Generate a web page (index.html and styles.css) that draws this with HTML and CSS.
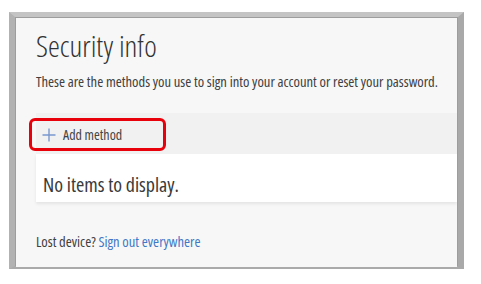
FILE: index.html
```html
<!DOCTYPE html>
<html lang="en">
<head>
  <meta charset="UTF-8" />
  <title>Security info</title>
  <link rel="stylesheet" href="styles.css">
</head>
<body>

  <div class="frame">
    <div class="panel">
      <h1 class="title">Security info</h1>
      <p class="intro">These are the methods you use to sign into your account or reset your password.</p>

      <div class="methods">
        <div class="toolbar">
          <button class="add-btn">
            <svg class="plus" width="14" height="14" viewBox="0 0 14 14">
              <path d="M7 0.5V13.5M0.5 7H13.5" stroke="#7a98cf" stroke-width="1.4" fill="none"/>
            </svg>
            <span>Add method</span>
          </button>
          <div class="highlight"></div>
        </div>
        <div class="empty">No items to display.</div>
      </div>

      <p class="lost">Lost device? <a href="#">Sign out everywhere</a></p>
    </div>
  </div>

</body>
</html>
```

FILE: styles.css
```css
body {
  margin: 0;
  background: #fff;
  font-family: 'Open Sans', 'Noto Sans', sans-serif;
  font-stretch: 75%;
  font-weight: 400;
  color: #404040;
}

.frame {
  margin: 12px 0 0 9px;
  width: 443px;
  height: 249px;
  border-style: solid;
  border-width: 5px 6px 3px 6px;
  border-color: #c4c4c4 #a9a9a9 #aaaaaa #b2b2b2;
  box-shadow: inset 0 0 0 1px #9d9d9d;
}

.panel {
  height: 100%;
  margin: 1px;
  background: #f7f7f7;
  padding-left: 20px;
  box-sizing: border-box;
  overflow: hidden;
}

.title {
  margin: 0;
  padding-top: 10px;
  font-size: 30px;
  font-weight: 300;
  line-height: 36px;
  color: #333;
}

.intro {
  margin: 8px 0 0;
  font-size: 14.6px;
  line-height: 18px;
}

.methods {
  margin-top: 23px;
}

.toolbar {
  position: relative;
  height: 41px;
  background: #f1f1f1;
  display: flex;
  align-items: center;
}

.add-btn {
  display: flex;
  align-items: center;
  gap: 7px;
  margin-left: 6px;
  margin-top: 2px;
  padding: 0;
  border: none;
  background: none;
  font-family: inherit;
  font-stretch: 75%;
  font-size: 14px;
  font-weight: 400;
  color: #444;
}

.highlight {
  position: absolute;
  left: -7px;
  top: 5px;
  width: 131px;
  height: 27px;
  border: 3px solid #e8000b;
  border-radius: 6px;
}

.empty {
  height: 48px;
  background: #fff;
  padding-left: 7px;
  font-size: 20px;
  line-height: 62px;
  color: #3a3a3a;
  box-shadow: 0 2px 3px rgba(0, 0, 0, 0.08);
}

.lost {
  margin: 29px 0 0;
  font-size: 14.6px;
}

.lost a {
  color: #3f78c6;
  text-decoration: none;
}
```
